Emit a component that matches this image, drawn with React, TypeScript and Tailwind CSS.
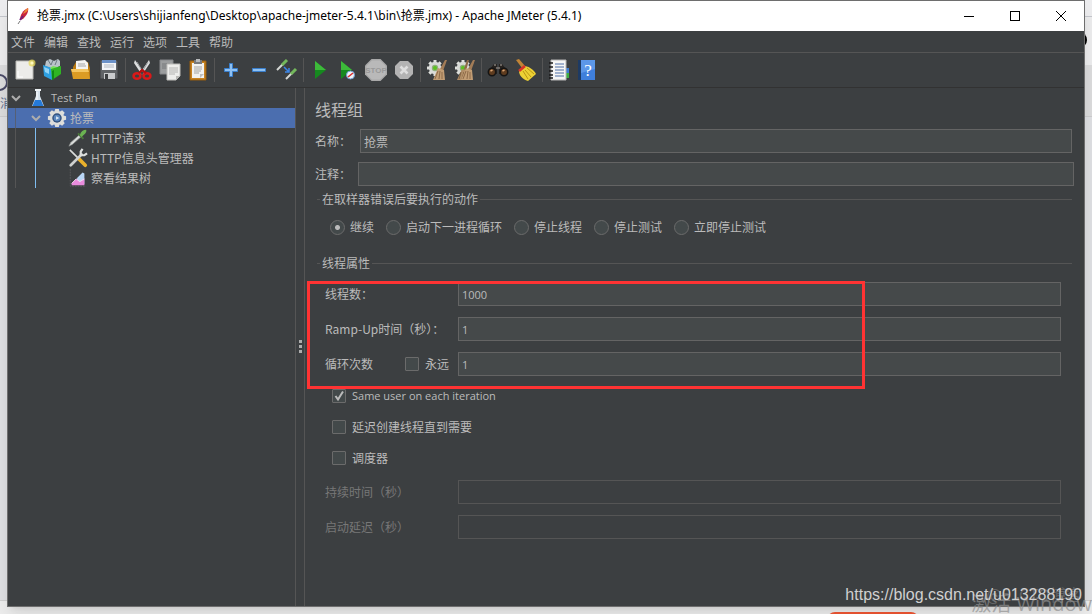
import type { ReactNode } from "react";

type TreeNode = {
  label: string;
  icon: ReactNode;
};

const MENUS = ["文件", "编辑", "查找", "运行", "选项", "工具", "帮助"];

const ERROR_ACTIONS = ["继续", "启动下一进程循环", "停止线程", "停止测试", "立即停止测试"];

// Latin-only strings are set a step smaller than the Chinese labels
const LATIN = "font-['Open_Sans',sans-serif] text-[11px]";

const FIELD = "h-6 min-w-0 flex-1 border border-[#646464] bg-[#45494a] px-[3px] text-[#bbbbbb] outline-none";

const GEAR_TEETH = [0, 45, 90, 135, 180, 225, 270, 315];

function Svg({ size = 22, children }: { size?: number; children: ReactNode }) {
  return (
    <svg width={size} height={size} viewBox="0 0 22 22" fill="none" aria-hidden>
      {children}
    </svg>
  );
}

function NewIcon() {
  return (
    <Svg>
      <path d="M2 2h17v18H2z" fill="#ecece9" stroke="#b9b9b4" />
      <path d="M4 12v6h5" stroke="#fff" />
      <circle cx="18" cy="4" r="3.5" fill="#e8d95a" fillOpacity=".75" />
      <circle cx="18" cy="4" r="1.6" fill="#fff9c0" />
    </Svg>
  );
}

function TemplatesIcon() {
  return (
    <Svg>
      <path d="M4 2l4-2 4 2 4-2 2 2v5l-7 3-8-3z" fill="#b9c3c9" />
      <path d="M6 1l3 5M11 1l-2 5M15 1l-2 5" stroke="#6d7b84" />
      <path d="M1 6l9 3v12l-8-4z" fill="#2d9fe0" />
      <path d="M2 8l5 2v5l-4-2z" fill="#8fd3f7" />
      <path d="M8 9l3-2 8 2-9 3z" fill="#7be05c" />
      <path d="M9 10l10-3v8l-9 6z" fill="#2fb523" />
      <path d="M10 12l2-1v9l-2 1z" fill="#118a12" />
    </Svg>
  );
}

function OpenIcon() {
  return (
    <Svg>
      <path d="M3 8l3-5h12l2 6v10H3z" fill="#b97a12" />
      <path d="M6 2l9-1 3 3v8H6z" fill="#f4f4f2" />
      <path d="M8 5h7M8 7h8" stroke="#a5a5a5" />
      <path d="M1 10h17l2 10H3z" fill="#dc9c24" />
      <path d="M1 10h17l1 3H2z" fill="#f5c660" />
    </Svg>
  );
}

function SaveIcon() {
  return (
    <Svg>
      <path d="M2 1h17l1 2v17H2z" fill="#606366" stroke="#3a3c3e" />
      <path d="M4 1h14v10H4z" fill="#f3f5f8" />
      <path d="M4 1h14v3H4z" fill="#6c92c9" />
      <path d="M6 6h10M6 8h10" stroke="#b3b9c2" />
      <path d="M6 14h11v6H6z" fill="#c9cbcd" />
      <path d="M7 15h3v5H7z" fill="#3c3e40" />
    </Svg>
  );
}

function CutIcon() {
  return (
    <Svg>
      <path d="M4 1l9 13-2 2L3 4zM18 1L9 14l2 2 8-12z" fill="#dcdedf" />
      <path d="M6 3l6 10M17 3l-6 10" stroke="#9a9c9e" />
      <ellipse cx="6" cy="17" rx="3.4" ry="2.8" stroke="#d91919" strokeWidth="2.6" />
      <ellipse cx="16" cy="17" rx="3.4" ry="2.8" stroke="#d91919" strokeWidth="2.6" />
      <path d="M8 14l3-3 4 3" stroke="#b40f0f" strokeWidth="2.4" />
    </Svg>
  );
}

function CopyIcon() {
  return (
    <Svg>
      <path d="M1 1h13v14H1z" fill="#9b9d9e" stroke="#85878a" />
      <path d="M3 5h8M3 7h8M3 9h8" stroke="#77797b" />
      <path d="M8 5h13v12l-4 4H8z" fill="#ededeb" stroke="#bdbdba" />
      <path d="M10 9h9M10 11h9M10 13h9M10 15h6" stroke="#b4b4b2" />
      <path d="M17 21v-4h4z" fill="#b8b8b5" />
    </Svg>
  );
}

function PasteIcon() {
  return (
    <Svg>
      <path d="M3 2h16v19H3z" fill="#c88321" stroke="#945c10" />
      <path d="M5 4h12v15H5z" fill="#f2f2f0" />
      <path d="M7 1h8v4H7z" fill="#77797b" />
      <path d="M9 0h4v3H9z" fill="#b7b9bb" />
      <path d="M7 8h8M7 10h8M7 12h7M7 14h5" stroke="#a4a4a2" />
      <path d="M13 19v-4h4z" fill="#bdbdbb" />
    </Svg>
  );
}

function PlusIcon() {
  return (
    <Svg>
      <path d="M9.5 4.5h3v5h5v3h-5v5h-3v-5h-5v-3h5z" fill="#8fc1f2" stroke="#3a7fcc" />
    </Svg>
  );
}

function MinusIcon() {
  return (
    <Svg>
      <path d="M4.5 9.5h13v3h-13z" fill="#8fc1f2" stroke="#3a7fcc" />
    </Svg>
  );
}

function ToggleIcon() {
  return (
    <Svg>
      <path d="M1 11l6-6" stroke="#d4d7d4" strokeWidth="2" />
      <path d="M6 6l5-5" stroke="#74b85c" strokeWidth="3" />
      <path d="M10 20l6-6" stroke="#d4d7d4" strokeWidth="2" />
      <path d="M15 15l5-5" stroke="#74b85c" strokeWidth="3" />
      <path d="M8 8l5 5M13 9v4H9" stroke="#3c86e6" strokeWidth="1.5" />
    </Svg>
  );
}

function StartIcon() {
  return (
    <Svg>
      <path d="M6 2l11 9-11 9z" fill="#16891f" />
      <path d="M6 2l11 9H6z" fill="#3dba3a" />
    </Svg>
  );
}

function StartNoPauseIcon() {
  return (
    <Svg>
      <path d="M4 2l11 9-11 9z" fill="#16891f" />
      <path d="M4 2l11 9H4z" fill="#3dba3a" />
      <circle cx="13.5" cy="16" r="4" fill="#f1f4f8" stroke="#6e9bd1" />
      <path d="M11 18l5-4" stroke="#d92f2f" strokeWidth="1.6" />
    </Svg>
  );
}

function StopIcon() {
  return (
    <svg width="22" height="22" viewBox="0 0 22 22" aria-hidden>
      <path d="M6.5 0h9L22 6.5v9L15.5 22h-9L0 15.5v-9z" fill="#a9a9a9" />
      <path d="M7 1.5h8L20.5 7v8L15 20.5H7L1.5 15V7z" fill="#b9b9b9" />
      <text
        x="11"
        y="14"
        textAnchor="middle"
        fontSize="8"
        fontWeight="bold"
        fontFamily="Liberation Sans, sans-serif"
        fill="#999999"
      >
        STOP
      </text>
    </svg>
  );
}

function ShutdownIcon() {
  return (
    <Svg>
      <path d="M7 2h8l5 5v8l-5 5H7l-5-5V7z" fill="#b3b3b3" />
      <path d="M7.5 7.5l7 7M14.5 7.5l-7 7" stroke="#dedede" strokeWidth="2.6" />
    </Svg>
  );
}

function ClearIcon({ all = false }: { all?: boolean }) {
  return (
    <Svg>
      {GEAR_TEETH.map((angle) => (
        <path key={angle} d="M7.5 1h3v4h-3z" fill="#dfe1dd" transform={`rotate(${angle} 9 9)`} />
      ))}
      <circle cx="9" cy="9" r="6.2" fill="#d9dbd8" />
      <circle cx="9" cy="9" r="3.2" fill="#8fae7b" />
      <circle cx="9" cy="9" r="2" fill="#5cc21f" />
      {all && (
        <>
          <path d="M15 1h-2l-3 9 2 2z" fill="#8d6a48" />
          <path d="M8 10l5 2v9H3z" fill="#b08d66" />
          <path d="M7 13l-2 7M10 13l-2 7" stroke="#80603f" />
        </>
      )}
      <path d="M21 1h-2l-5 9 3 2z" fill="#a27c57" />
      <path d="M12 9l6 2 1 10H7z" fill="#c19d74" />
      <path d="M12 12l-3 8M14 12l-1 8M16 13v7" stroke="#8d6a48" />
    </Svg>
  );
}

function SearchIcon() {
  return (
    <Svg>
      <path d="M3 10l4-5h3v10H2zM19 10l-4-5h-3v10h8z" fill="#26221f" />
      <path d="M7 6h2M13 6h2M9 9h4" stroke="#817c77" strokeWidth="1.5" />
      <circle cx="5" cy="13" r="3.7" fill="#5e3c1f" stroke="#151413" strokeWidth="1.5" />
      <circle cx="17" cy="13" r="3.7" fill="#5e3c1f" stroke="#151413" strokeWidth="1.5" />
      <path d="M3.5 12l2-1M15.5 12l2-1" stroke="#dba370" strokeWidth="1.5" />
    </Svg>
  );
}

function BroomIcon() {
  return (
    <Svg>
      <path d="M1 1l3-1 6 7-3 2z" fill="#c08437" />
      <path d="M10 7c5 1 9 4 11 8l-8 7C7 20 4 16 4 12z" fill="#ecd034" />
      <path d="M8 12l5 8M10 11l6 7M12 9l7 6" stroke="#b99614" />
      <path d="M4 12l6-5" stroke="#d93429" strokeWidth="2.8" />
    </Svg>
  );
}

function FunctionIcon() {
  return (
    <Svg>
      <path d="M16 9h5v5h-5z" fill="#3c7bd0" />
      <path d="M16 14h5v5h-5z" fill="#3cae42" />
      <path d="M3 1h15v20H3z" fill="#f6f6f6" stroke="#b5b5b5" />
      <path d="M7 5h9M7 8h9M7 11h9M7 14h9M7 17h9" stroke="#4f6ea6" strokeWidth="1.2" />
      <path d="M1 4h4M1 8h4M1 12h4M1 16h4M1 19h4" stroke="#1a1a1a" strokeWidth="1.5" />
    </Svg>
  );
}

function HelpIcon() {
  return (
    <svg width="22" height="22" viewBox="0 0 22 22" aria-hidden>
      <path d="M2 1h4v20H2z" fill="#1d3a63" />
      <path d="M5 1h14v20H5z" fill="#3f7fdb" />
      <path d="M5 1h14v9L5 14z" fill="#5c97e8" />
      <text x="12" y="17" textAnchor="middle" fontSize="17" fontFamily="Liberation Serif, serif" fill="#fff">
        ?
      </text>
    </svg>
  );
}

function FlaskIcon() {
  return (
    <svg width="14" height="20" viewBox="0 0 14 20" aria-hidden>
      <path d="M5 2h4v6l4 10H1L5 8z" fill="#d5e0ea" />
      <path d="M4 12h6l2.5 6h-11z" fill="#2579d8" />
      <path d="M4 1h6v2H4z" fill="#eef2f5" />
      <path d="M6 4v8" stroke="#fff" />
    </svg>
  );
}

function GearIcon() {
  return (
    <Svg size={20}>
      {GEAR_TEETH.map((angle) => (
        <path key={angle} d="M9 1h4l1 4H8z" fill="#dededb" transform={`rotate(${angle} 11 11)`} />
      ))}
      <circle cx="11" cy="11" r="7.8" fill="#dededb" />
      <circle cx="11" cy="11" r="5.2" fill="#33527f" />
      <circle cx="11" cy="11" r="3.6" fill="#5b87bd" />
      <path d="M10 9l3.5 2-3.5 2z" fill="#dbe9f8" />
    </Svg>
  );
}

function SamplerIcon() {
  return (
    <Svg size={20}>
      <path d="M1 20l2-4 9-8 2 2-9 8z" fill="#d9dcda" stroke="#8e9290" strokeWidth=".7" />
      <path d="M11 6l6 6" stroke="#4b7a3b" strokeWidth="2" />
      <path d="M13 8c1-4 4-6 7-6 1 3-2 5-5 8z" fill="#6bb452" />
    </Svg>
  );
}

function ToolsIcon() {
  return (
    <Svg size={20}>
      <path d="M2 2l10 10" stroke="#dadcdb" strokeWidth="1.8" />
      <path d="M12 12l7 7" stroke="#eab12c" strokeWidth="4" strokeLinecap="round" />
      <path d="M3 19L15 7" stroke="#cfd1d0" strokeWidth="3" strokeLinecap="round" />
      <path d="M16 1l-2 3v4h4l3-2" stroke="#dcdedd" strokeWidth="2.4" />
    </Svg>
  );
}

function ResultsIcon() {
  return (
    <Svg size={20}>
      <path d="M2.5 1v19H20" stroke="#5a5c5e" strokeDasharray="2 1" />
      <path d="M10 11l6-6 2 1v12h-8z" fill="#b9d6f6" />
      <path d="M4 17l5-5 4 3 5-3v7H4z" fill="#e98bdc" />
      <path d="M4 17l5-5 4 3 5-3" stroke="#f8dcf4" />
    </Svg>
  );
}

function FeatherIcon() {
  return (
    <svg width="12" height="18" viewBox="0 0 12 18" aria-hidden>
      <path d="M11 1c1 4-2 8-5 11l-3 1C3 8 6 3 11 1z" fill="#c7253e" />
      <path d="M11 1c1 2-1 4-5 6 1-3 3-5 5-6z" fill="#ee8434" />
      <path d="M3 13l3-4" stroke="#71207a" strokeWidth="2" />
      <path d="M1 17l2-3" stroke="#777" />
    </svg>
  );
}

function Chevron() {
  return (
    <svg width="10" height="8" viewBox="0 0 10 8" fill="none" aria-hidden>
      <path d="M1 2l4 4 4-4" stroke="#adadad" strokeWidth="2" />
    </svg>
  );
}

const TOOL_GROUPS: { name: string; icon: ReactNode }[][] = [
  [
    { name: "New", icon: <NewIcon /> },
    { name: "Templates", icon: <TemplatesIcon /> },
    { name: "Open", icon: <OpenIcon /> },
    { name: "Save", icon: <SaveIcon /> },
  ],
  [
    { name: "Cut", icon: <CutIcon /> },
    { name: "Copy", icon: <CopyIcon /> },
    { name: "Paste", icon: <PasteIcon /> },
  ],
  [
    { name: "Expand all", icon: <PlusIcon /> },
    { name: "Collapse all", icon: <MinusIcon /> },
    { name: "Toggle", icon: <ToggleIcon /> },
  ],
  [
    { name: "Start", icon: <StartIcon /> },
    { name: "Start no pauses", icon: <StartNoPauseIcon /> },
    { name: "Stop", icon: <StopIcon /> },
    { name: "Shutdown", icon: <ShutdownIcon /> },
  ],
  [
    { name: "Clear", icon: <ClearIcon /> },
    { name: "Clear all", icon: <ClearIcon all /> },
  ],
  [
    { name: "Search", icon: <SearchIcon /> },
    { name: "Reset search", icon: <BroomIcon /> },
  ],
  [
    { name: "Function helper", icon: <FunctionIcon /> },
    { name: "Help", icon: <HelpIcon /> },
  ],
];

const CHILDREN: TreeNode[] = [
  { label: "HTTP请求", icon: <SamplerIcon /> },
  { label: "HTTP信息头管理器", icon: <ToolsIcon /> },
  { label: "察看结果树", icon: <ResultsIcon /> },
];

function TitleBar() {
  return (
    <header className="flex h-[30px] shrink-0 items-center bg-white pl-[9px] text-black">
      <FeatherIcon />
      <h1 className="ml-2 flex-1 truncate font-['Noto_Sans','Noto_Sans_CJK_SC',sans-serif] text-[12px]">
        抢票.jmx (C:\Users\shijianfeng\Desktop\apache-jmeter-5.4.1\bin\抢票.jmx) - Apache JMeter (5.4.1)
      </h1>
      <button aria-label="Minimize" className="flex h-full w-[46px] items-center justify-center">
        <span className="h-px w-[10px] bg-black" />
      </button>
      <button aria-label="Maximize" className="flex h-full w-[46px] items-center justify-center">
        <span className="size-[10px] border border-black" />
      </button>
      <button aria-label="Close" className="flex h-full w-[46px] items-center justify-center">
        <svg width="10" height="10" viewBox="0 0 10 10" stroke="#000" aria-hidden>
          <path d="M0 0l10 10M10 0L0 10" />
        </svg>
      </button>
    </header>
  );
}

function MenuBar() {
  return (
    <nav className="flex h-[22px] shrink-0 items-center gap-[9px] border-b border-[#555555] pl-[3px]">
      {MENUS.map((menu) => (
        <button key={menu}>{menu}</button>
      ))}
    </nav>
  );
}

function Toolbar() {
  return (
    <div className="flex h-[35px] shrink-0 items-center border-b border-[#323232] pl-[3px]">
      {TOOL_GROUPS.map((group, i) => (
        <div key={group[0].name} className="flex items-center">
          {i > 0 && <span className="mx-0.5 h-6 w-px bg-[#555555]" />}
          {group.map((tool) => (
            <button key={tool.name} aria-label={tool.name} className="flex w-7 justify-center">
              {tool.icon}
            </button>
          ))}
        </div>
      ))}
    </div>
  );
}

function Tree() {
  return (
    <aside className="w-[288px] shrink-0 border-r border-[#555555]">
      <div className="flex h-5 items-center pl-[3px]">
        <Chevron />
        <span className="ml-[10px]">
          <FlaskIcon />
        </span>
        <span className={`ml-[6px] ${LATIN}`}>Test Plan</span>
      </div>
      <div className="flex h-5 items-center bg-[#4b6eaf]">
        <span className="ml-[7px] h-full w-px bg-[#555f75]" />
        <span className="ml-[15px]">
          <Chevron />
        </span>
        <span className="ml-[6px]">
          <GearIcon />
        </span>
        <span className="ml-[3px]">抢票</span>
      </div>
      <ul className="ml-[7px] border-l border-[#555555] pl-[19px]">
        {CHILDREN.map((node) => (
          <li key={node.label} className="flex h-5 items-center gap-[3px] border-l border-[#7fbdf0] pl-8">
            {node.icon}
            <span>{node.label}</span>
          </li>
        ))}
      </ul>
    </aside>
  );
}

function CheckBox({
  id,
  label,
  checked = false,
  className = "",
}: {
  id: string;
  label: string;
  checked?: boolean;
  className?: string;
}) {
  return (
    <span className="flex items-center gap-[6px]">
      <span className="relative flex">
        <input
          id={id}
          type="checkbox"
          defaultChecked={checked}
          className="peer size-[14px] appearance-none rounded-[1px] border border-[#6b6b6b] bg-[#43494a]"
        />
        <svg
          viewBox="0 0 14 14"
          fill="none"
          className="pointer-events-none absolute inset-0 hidden size-[14px] peer-checked:block"
          aria-hidden
        >
          <path d="M3.5 7l2.5 3.5 5-8" stroke="#bbbbbb" strokeWidth="2" />
        </svg>
      </span>
      <label htmlFor={id} className={className}>
        {label}
      </label>
    </span>
  );
}

function FieldRow({
  id,
  label,
  value,
  disabled = false,
  children,
}: {
  id: string;
  label: string;
  value?: string;
  disabled?: boolean;
  children?: ReactNode;
}) {
  return (
    <div className="flex items-center pr-[11px] pl-2">
      <div className="flex w-[133px] shrink-0 items-center justify-between pr-[9px]">
        <label htmlFor={id} className={disabled ? "text-[#777777]" : ""}>
          {label}
        </label>
        {children}
      </div>
      <input
        id={id}
        defaultValue={value}
        disabled={disabled}
        className={
          disabled ? "h-6 min-w-0 flex-1 border border-[#555555] bg-[#3c3f41]" : `${FIELD} ${LATIN}`
        }
      />
    </div>
  );
}

function ThreadGroupPanel() {
  return (
    <main className="min-w-0 flex-1 border-l border-[#555555] pt-[9px]">
      <h2 className="ml-[10px] text-[16px] leading-6">线程组</h2>

      <div className="mt-2 mr-3 ml-[10px] flex items-center">
        <label htmlFor="name" className="w-[45px]">
          名称：
        </label>
        <input id="name" defaultValue="抢票" className={`${FIELD} text-[12px]`} />
      </div>
      <div className="mt-[9px] mr-[10px] ml-[10px] flex items-center">
        <label htmlFor="comment" className="w-[43px]">
          注释：
        </label>
        <input id="comment" className={`${FIELD} text-[12px]`} />
      </div>

      <fieldset className="mx-3 mt-[5px] border-t border-[#555555]">
        <legend className="ml-[3px] px-[2px] leading-4">在取样器错误后要执行的动作</legend>
        <div className="mt-3 flex gap-3 pl-[13px]">
          {ERROR_ACTIONS.map((action, i) => (
            <label key={action} className="flex items-center gap-[5px] leading-4">
              <input
                type="radio"
                name="on-error"
                defaultChecked={i === 0}
                className="size-[15px] appearance-none rounded-full border border-[#6b6b6b] bg-[#43494a] bg-[radial-gradient(circle,#bbbbbb_2px,transparent_3px)] not-checked:bg-none"
              />
              {action}
            </label>
          ))}
        </div>
      </fieldset>

      <fieldset className="mx-3 mt-5 border-t border-[#555555]">
        <legend className="ml-[3px] px-[2px] leading-4">线程属性</legend>
        <div className="relative mt-[11px] flex flex-col gap-[11px]">
          <FieldRow id="threads" label="线程数：" value="1000" />
          <FieldRow id="ramp-up" label="Ramp-Up时间（秒）：" value="1" />
          <FieldRow id="loops" label="循环次数" value="1">
            <CheckBox id="forever" label="永远" />
          </FieldRow>
          <div className="pointer-events-none absolute -top-px -left-[10px] h-[108px] w-[558px] border-[3px] border-[#ff3333]" />
        </div>
        <div className="mt-3 flex flex-col gap-[15px] pl-[15px] leading-4">
          <CheckBox id="same-user" label="Same user on each iteration" checked className={LATIN} />
          <CheckBox id="delay" label="延迟创建线程直到需要" />
          <CheckBox id="scheduler" label="调度器" />
        </div>
        <div className="mt-[14px] flex flex-col gap-[11px]">
          <FieldRow id="duration" label="持续时间（秒）" disabled />
          <FieldRow id="startup-delay" label="启动延迟（秒）" disabled />
        </div>
      </fieldset>
    </main>
  );
}

// Page that shows around the edges of the window
function Backdrop() {
  return (
    <div className="absolute inset-0 flex flex-col overflow-hidden bg-[#dddee1]">
      <div className="h-[17px] border-b border-[#c4c6cc] bg-[#ececee]" />
      <div className="h-12 bg-[#ebebec]" />
      <div className="h-[52px] border-b border-[#cbcbcd] bg-[#dadadb]" />
      <div className="flex-1" />
      <div className="h-[14px] border-t border-[#cfcfcf] bg-[#ececec]" />
      <span className="absolute top-[74px] -left-[9px] size-[17px] rounded-full border-2 border-[#4a4a66]" />
      <span className="absolute top-8 right-[5px] size-4 rounded-full bg-black" />
      <span className="absolute top-[95px] left-0 leading-4 text-[#5b6b8c]">消</span>
    </div>
  );
}

export default function App() {
  return (
    <div className="relative flex h-screen flex-col overflow-hidden px-[7px] pb-[7px] font-['Noto_Sans_CJK_SC',sans-serif] text-[12px] text-[#bbbbbb]">
      <Backdrop />
      <div className="relative flex min-h-0 flex-1 flex-col border border-[#6e6e6e] bg-[#3c3f41] shadow-lg">
        <TitleBar />
        <MenuBar />
        <Toolbar />
        <div className="flex min-h-0 flex-1">
          <Tree />
          <div className="flex w-2 shrink-0 flex-col items-center justify-center gap-[2px] pb-[2px]">
            <span className="size-[3px] bg-[#adadad]" />
            <span className="size-[3px] bg-[#adadad]" />
            <span className="size-[3px] bg-[#adadad]" />
          </div>
          <ThreadGroupPanel />
        </div>
      </div>

      <div className="absolute -bottom-[14px] left-[827px] h-4 w-[92px] rounded-full bg-[#e2502f]" />
      <span className="absolute right-[10px] bottom-[10px] text-[16px] leading-5 text-[#808080]/60">@51CTO博客</span>
      <span className="absolute right-0 bottom-0 font-['Open_Sans','Noto_Sans_CJK_SC',sans-serif] text-[20px] leading-5 whitespace-nowrap text-[#909090]/70">
        激活 Window
      </span>
      <span className="absolute right-[10px] bottom-[9px] font-['Liberation_Sans','Noto_Sans_CJK_SC',sans-serif] text-[16px] leading-5 text-[#d0d0d0]">
        https://blog.csdn.net/u013288190
      </span>
    </div>
  );
}
